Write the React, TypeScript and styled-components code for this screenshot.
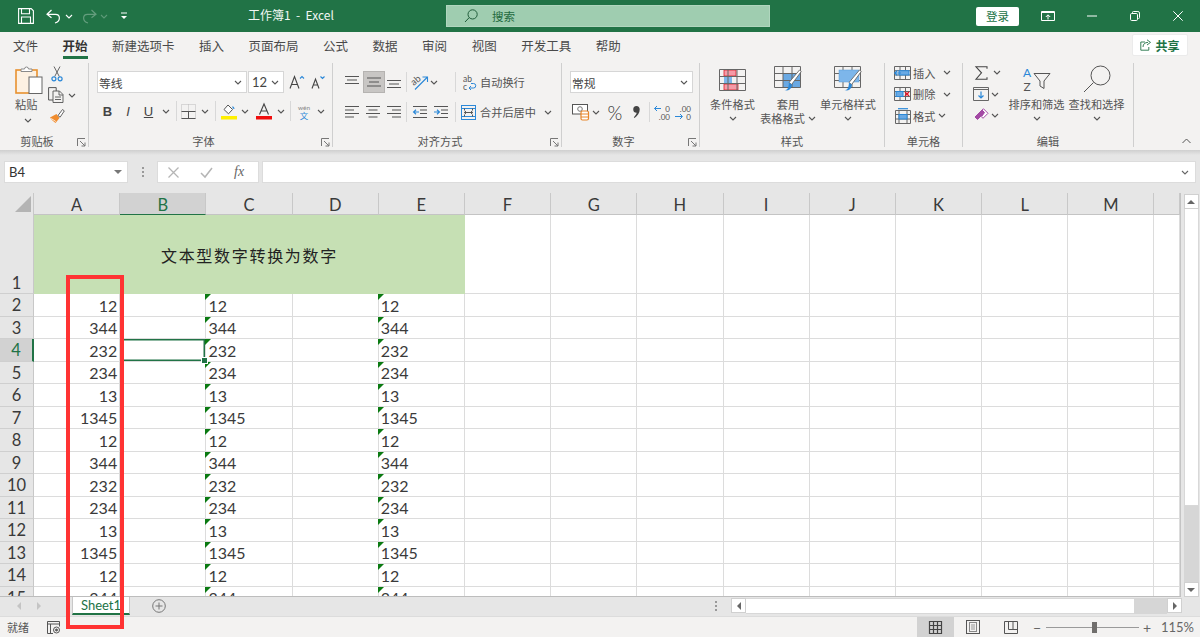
import React from "react";
import styled, { createGlobalStyle } from "styled-components";

const UI = `"Open Sans", "Noto Sans CJK SC", sans-serif`;
const CJK = `"Noto Sans CJK SC", "Noto Sans", sans-serif`;
const SHEET = `Lato, "Noto Sans CJK SC", sans-serif`;
const GREEN = "#217346";
const BLUE = "#2b88d8";

const Global = createGlobalStyle`
  html, body { margin: 0; padding: 0; background: #e6e6e6; }
  * { box-sizing: border-box; }
  svg { display: block; flex: none; overflow: visible; }
`;

const Page = styled.div`
  position: relative; width: 1200px; height: 637px; overflow: hidden;
  display: flex; flex-direction: column; font-family: ${UI}; color: #444;
`;

/* ---- title bar ---- */
const TitleBar = styled.div`
  height: 32px; flex: none; background: ${GREEN}; display: flex; align-items: center; color: #fff;
`;
const Qat = styled.div`width: 248px; padding-left: 18px; display: flex; align-items: center; flex: none;`;
const TitleText = styled.div`width: 198px; flex: none; font-size: 12px; font-family: ${CJK}; white-space: pre; color: #f2f7f4; padding-bottom: 4px;`;
const SearchBox = styled.div`
  width: 324px; height: 22px; flex: none; background: #9fcdb0; border: 1px solid #b0d6be;
  display: flex; align-items: center; padding-left: 17px; gap: 14px; color: #1f6b40;
  font-size: 11.5px; font-family: ${CJK};
`;
const SignIn = styled.div`
  margin-left: 206px; width: 43px; height: 19px; background: #fff; border-radius: 2px; color: ${GREEN};
  font-size: 11.5px; font-family: ${CJK}; display: flex; align-items: center; justify-content: center; flex: none;
`;
const WinBtn = styled.div<{ $w: number }>`
  width: ${(p) => p.$w}px; flex: none; display: flex; align-items: center; justify-content: center;
`;

/* ---- tabs ---- */
const TabRow = styled.div`
  height: 30px; flex: none; background: #f3f2f1; display: flex; align-items: center;
  padding: 0 12px 4px 13px; font-family: ${CJK}; font-size: 12.5px; gap: 24.5px; color: #444;
`;
const Tab = styled.div<{ $on?: boolean }>`
  position: relative; white-space: nowrap; font-weight: ${(p) => (p.$on ? 700 : 400)}; color: ${(p) => (p.$on ? "#333" : "#4a4a4a")};
  ${(p) => p.$on && `&::after { content: ""; position: absolute; left: 0; right: 0; bottom: -4px; height: 3px; background: ${GREEN}; }`}
`;
const Share = styled.div`
  margin-left: auto; width: 56px; height: 22px; background: #fff; border: 1px solid #ebebeb; border-radius: 2px;
  display: flex; align-items: center; justify-content: center; gap: 3px; color: ${GREEN}; font-weight: 700; font-size: 12px;
`;

/* ---- ribbon ---- */
const Ribbon = styled.div`
  height: 88px; flex: none; background: #f3f2f1; display: flex; font-family: ${CJK}; font-size: 11.2px; color: #555;
`;
const Group = styled.div<{ $w: number; $last?: boolean }>`
  width: ${(p) => p.$w}px; flex: none; display: flex; flex-direction: column; position: relative;
  &::after { content: ""; position: absolute; top: 1px; bottom: 3px; right: 0; width: 1px; background: ${(p) => (p.$last ? "transparent" : "#cfcfcf")}; }
`;
const GroupBody = styled.div<{ $pl?: number; $row?: boolean }>`
  height: 73px; flex: none; padding-left: ${(p) => p.$pl ?? 0}px; display: flex; flex-direction: ${(p) => (p.$row ? "row" : "column")};
`;
const GroupFoot = styled.div<{ $end?: boolean }>`
  height: 15px; display: flex; align-items: center; padding: 0 ${(p) => (p.$end ? 9 : 1)}px 3px 0;
  justify-content: ${(p) => (p.$end ? "flex-end" : "flex-start")};
`;
const GroupLabel = styled.div<{ $launcher?: boolean }>`
  flex: 1; text-align: center; padding-right: ${(p) => (p.$launcher ? 14 : 0)}px; color: #555; line-height: 14px;
`;
const LauncherBox = styled.div`position: absolute; right: 3px; bottom: 3px;`;
const ToolRow = styled.div<{ $mt?: number; $h?: number }>`
  display: flex; align-items: center; height: ${(p) => p.$h ?? 22}px; margin-top: ${(p) => p.$mt ?? 0}px; flex: none;
`;
const Tool = styled.div<{ $w: number; $ml?: number; $on?: boolean }>`
  width: ${(p) => p.$w}px; margin-left: ${(p) => p.$ml ?? 0}px; height: 22px; flex: none;
  display: flex; align-items: center; justify-content: center; color: #444;
  ${(p) => p.$on && `background: #c8c6c4; border: 1px solid #b5b3b1;`}
`;
const Letter = styled.span<{ $b?: boolean; $i?: boolean; $u?: boolean }>`
  font-family: "Liberation Sans", sans-serif; font-size: 13px; line-height: 1;
  font-weight: ${(p) => (p.$b ? 700 : 400)}; font-style: ${(p) => (p.$i ? "italic" : "normal")};
  text-decoration: ${(p) => (p.$u ? "underline" : "none")}; color: #444;
`;
const VSep = styled.div<{ $ml?: number; $mr?: number }>`
  width: 1px; height: 20px; flex: none; background: #d8d8d8; margin-left: ${(p) => p.$ml ?? 0}px; margin-right: ${(p) => p.$mr ?? 0}px;
`;
const Combo = styled.div<{ $w: number; $ml?: number }>`
  width: ${(p) => p.$w}px; height: 22px; margin-left: ${(p) => p.$ml ?? 0}px; background: #fff; border: 1px solid #d6d6d6; flex: none;
  display: flex; align-items: center; justify-content: space-between; padding: 0 4px 0 1px; font-size: 11.8px; color: #444;
`;
const ComboNum = styled.span`font-family: Lato, sans-serif; font-size: 13px; padding-left: 2px;`;
const ToolText = styled.span<{ $ml?: number }>`margin-left: ${(p) => p.$ml ?? 0}px; white-space: nowrap; flex: none; color: #555;`;
const BigBtn = styled.div<{ $w: number; $ml?: number }>`
  width: ${(p) => p.$w}px; margin-left: ${(p) => p.$ml ?? 0}px; flex: none; display: flex; flex-direction: column; align-items: center;
`;
const BigIcon = styled.div<{ $pb?: number; $h?: number }>`
  height: ${(p) => p.$h ?? 35}px; flex: none; display: flex; align-items: flex-end; padding-bottom: ${(p) => p.$pb ?? 5}px;
`;
const BigLine = styled.div`height: 14px; line-height: 14px; flex: none; white-space: nowrap; display: flex; align-items: center; gap: 3px; color: #555;`;
const ClipLeft = styled.div`width: 47px; padding-left: 15px; flex: none; display: flex; flex-direction: column;`;
const PasteLabel = styled.div`height: 17px; line-height: 17px; flex: none; color: #555;`;
const PasteChev = styled.div`height: 14px; padding-left: 9px; display: flex; align-items: center;`;
const ClipRight = styled.div`flex: none; display: flex; flex-direction: column; padding-top: 4px; gap: 5px;`;
const SmallRow = styled.div`display: flex; align-items: center; height: 16px;`;
const SmallCol = styled.div`width: 35px; flex: none;`;
const Shade = styled.div`height: 5px; flex: none; background: linear-gradient(#cfcfcf, #e6e6e6);`;

/* ---- formula bar ---- */
const FormulaBar = styled.div`
  height: 38px; flex: none; background: #e6e6e6; display: flex; align-items: flex-start; padding: 6px 4px 0 4px;
`;
const NameBox = styled.div`
  width: 124px; height: 22px; background: #fff; border: 1px solid #dcdcdc; display: flex; align-items: center; justify-content: space-between;
  padding: 0 5px 0 4px; font-family: Lato, sans-serif; font-size: 13px; color: #333; flex: none;
`;
const Dots = styled.div`width: 29px; height: 22px; flex: none; display: flex; align-items: center; justify-content: center;`;
const FxBox = styled.div`
  width: 102px; height: 22px; background: #fff; border: 1px solid #dcdcdc; display: flex; align-items: center; gap: 21px; padding-left: 10px; flex: none;
`;
const FxText = styled.span`font-family: "Liberation Serif", serif; font-style: italic; font-size: 14px; color: #666;`;
const FormulaInput = styled.div`
  margin-left: 3px; flex: 1; height: 22px; background: #fff; border: 1px solid #dcdcdc; display: flex; align-items: center; justify-content: flex-end; padding-right: 6px;
`;

/* ---- sheet ---- */
const SheetArea = styled.div`height: 404px; flex: none; display: flex; background: #e6e6e6;`;
const Grid = styled.div`
  width: 1181px; flex: none; height: 404px; overflow: hidden; display: grid; background: #fff;
  grid-template-columns: 34px repeat(13, 86.2px) 1fr; grid-template-rows: 22px 79px; grid-auto-rows: 22.5px;
  border-bottom: 1px solid #bdbdbd; border-right: 1px solid #c4c4c4; font-family: ${SHEET}; font-weight: 400; font-size: 16px; color: #3a3a3a;
`;
const Corner = styled.div`background: #e6e6e6; border-right: 1px solid #c8c8c8; display: flex; align-items: center; justify-content: flex-end; padding-right: 2px;`;
const ColHead = styled.div<{ $on?: boolean }>`
  background: ${(p) => (p.$on ? "#d2d2d2" : "#e6e6e6")}; color: ${(p) => (p.$on ? GREEN : "#3a3a3a")}; border-right: 1px solid #c8c8c8;
  border-bottom: ${(p) => (p.$on ? `1px solid ${GREEN}` : "1px solid #c4c4c4")}; display: flex; align-items: center; justify-content: center; padding-top: 3px; font-size: 16.5px;
`;
const RowHead = styled.div<{ $on?: boolean; $tall?: boolean }>`
  background: ${(p) => (p.$on ? "#d2d2d2" : "#e6e6e6")}; color: ${(p) => (p.$on ? GREEN : "#3a3a3a")};
  border-bottom: 1px solid #cfcfcf; border-right: ${(p) => (p.$on ? `2px solid ${GREEN}` : "1px solid #c8c8c8")};
  display: flex; align-items: ${(p) => (p.$tall ? "flex-end" : "center")}; justify-content: center; font-size: 16.5px; padding-top: 1px;
`;
const Merged = styled.div`
  grid-column: span 5; background: #c6e0b4; display: flex; align-items: center; justify-content: center;
  font-family: ${CJK}; font-weight: 400; font-size: 16px; letter-spacing: 1.7px; color: #222;
`;
const Cell = styled.div<{ $num?: boolean; $text?: boolean; $sel?: boolean }>`
  position: relative; border-right: 1px solid #dcdcdc; border-bottom: 1px solid #dcdcdc; display: flex; align-items: center; padding: 1px 2px 0;
  justify-content: ${(p) => (p.$num ? "flex-end" : "flex-start")}; min-width: 0;
  ${(p) => p.$text && `&::before { content: ""; position: absolute; left: -1px; top: 0; border-style: solid; border-width: 6px 6px 0 0; border-color: #0b7a12 transparent transparent transparent; }`}
  ${(p) => p.$sel && `box-shadow: inset 0 0 0 1.5px ${GREEN}; &::after { content: ""; position: absolute; right: -3px; bottom: -3px; width: 5px; height: 5px; background: ${GREEN}; border: 1px solid #fff; z-index: 2; }`}
`;
const VScroll = styled.div`width: 19px; flex: none; display: flex; flex-direction: column; align-items: center; padding: 1px 0 0 1px;`;
const ScrollBtn = styled.div`
  width: 15px; height: 15px; flex: none; background: #fff; border: 1px solid #d0d0d0;
  display: flex; align-items: center; justify-content: center;
`;
const VThumb = styled.div`width: 15px; height: 297px; background: #fff; flex: none; border: 1px solid #d8d8d8; border-top: 0;`;
const VTrack = styled.div`width: 15px; flex: 1; background: #d6d6d6;`;

/* ---- sheet tab bar ---- */
const SheetBar = styled.div`height: 19px; flex: none; background: #e6e6e6; display: flex; align-items: flex-start; padding-left: 16px;`;
const Arrows = styled.div`width: 56px; height: 18px; display: flex; align-items: center; gap: 14px; flex: none;`;
const SheetTab = styled.div`
  width: 58px; height: 18px; flex: none; background: #fff; color: ${GREEN}; border-left: 1px solid #c8c8c8; border-right: 1px solid #c8c8c8;
  border-bottom: 2px solid ${GREEN}; display: flex; align-items: center; justify-content: center; font-size: 13px; font-family: Lato, sans-serif;
`;
const AddBtn = styled.div`margin-left: 22px; height: 18px; display: flex; align-items: center; flex: none;`;
const BarDots = styled.div`margin-left: 549px; width: 6px; height: 18px; display: flex; align-items: center; flex: none;`;
const HScroll = styled.div`margin-left: 10px; width: 451px; height: 16px; margin-top: 1px; display: flex; flex: none;`;
const HThumb = styled.div`width: 388px; background: #fff; border-top: 1px solid #d8d8d8; border-bottom: 1px solid #d8d8d8; flex: none;`;
const HTrack = styled.div`flex: 1; background: #d6d6d6;`;

/* ---- status bar ---- */
const StatusBar = styled.div`
  height: 21px; flex: none; background: #f3f2f1; border-top: 1px solid #dcdcdc; display: flex; align-items: center; padding-left: 7px;
  font-family: ${CJK}; font-size: 11px; color: #555;
`;
const MacroSlot = styled.div`margin-left: 18px; flex: none;`;
const ViewBtn = styled.div<{ $on?: boolean; $ml?: number }>`
  width: 37px; height: 20px; flex: none; margin-left: ${(p) => p.$ml ?? 0}px; background: ${(p) => (p.$on ? "#d2d2d2" : "transparent")};
  display: flex; align-items: center; justify-content: center;
`;
const Zoomer = styled.div`margin-left: 3px; width: 124px; height: 20px; display: flex; align-items: center; flex: none;`;
const ZoomTrack = styled.div`
  position: relative; width: 93px; height: 1px; background: #9a9a9a; margin: 0 3px 0 4px; flex: none;
`;
const ZoomThumb = styled.div`position: absolute; left: 46px; top: -5px; width: 5px; height: 11px; background: #706e6c;`;
const ZoomSign = styled.span`width: 10px; font-family: Lato, sans-serif; font-size: 14px; color: #666; text-align: center; flex: none;`;
const ZoomPct = styled.div`margin-left: 5px; font-family: Lato, sans-serif; font-size: 13px; color: #666; flex: none;`;

/* ---- annotation ---- */
const RedBox = styled.div`
  position: absolute; left: 66px; top: 275px; width: 58px; height: 354px; border: 4.5px solid #ff3333; pointer-events: none; z-index: 5;
`;

/* ---- icons ---- */
const Chev = ({ c = "#555" }: { c?: string }) => (
  <svg width="8" height="5" viewBox="0 0 8 5"><path d="M1 1l3 3 3-3" fill="none" stroke={c} strokeWidth="1.1" /></svg>
);
const Launcher = () => (
  <LauncherBox>
    <svg width="9" height="9" viewBox="0 0 9 9" fill="none" stroke="#777"><path d="M.5 8V.5H8M3 3l5 5M8 4.5V8H4.5" /></svg>
  </LauncherBox>
);
const SaveIcon = () => (
  <svg width="16" height="16" viewBox="0 0 16 16" fill="none" stroke="#fff" strokeWidth="1.1">
    <path d="M.6.6h12.6l2.2 2.2v12.6H.6zM3.5.8v5h8v-5M3.5 15.2V9h9v6.2" />
  </svg>
);
const UndoIcon = () => (
  <svg width="15" height="15" viewBox="0 0 15 15" fill="none" stroke="#fff" strokeWidth="1.2">
    <path d="M5.5 1 1 5.3l4.5 3.5M1.5 5.3h8c5 0 5.500 7-.5 8.700" />
  </svg>
);
const RedoIcon = () => (
  <svg width="15" height="15" viewBox="0 0 15 15" fill="none" stroke="#fff" strokeWidth="1.2" opacity=".3">
    <path d="M9.5 1 14 5.3 9.5 8.8M13.5 5.3h-8c-5 0-5.5 7 .5 8.700" />
  </svg>
);
const QatMenu = () => (
  <svg width="8" height="8" viewBox="0 0 8 8"><path d="M1 1h6" stroke="#fff" /><path d="M1 4h6L4 7z" fill="#fff" /></svg>
);
const SearchIcon = () => (
  <svg width="14" height="14" viewBox="0 0 14 14" fill="none" stroke="#1f5c3a" strokeWidth="1"><circle cx="8.6" cy="5.4" r="4.6" /><path d="M5.2 8.6 1 13" /></svg>
);
const RibbonDisplay = () => (
  <svg width="14" height="12" viewBox="0 0 14 12" fill="none" stroke="#fff"><path d="M.5 1.5h13v9H.5z" /><path d="M.5 2.5h13" /><path d="M7 9.5V5M4.8 7 7 4.8 9.2 7" /></svg>
);
const MinIcon = () => <svg width="10" height="2" viewBox="0 0 10 2"><path d="M0 1h10" stroke="#fff" /></svg>;
const RestoreIcon = () => (
  <svg width="10" height="10" viewBox="0 0 10 10" fill="none" stroke="#fff"><rect x=".5" y="2.5" width="7" height="7" rx="1.2" /><path d="M2.5 2.3V1.6A1 1 0 0 1 3.5.5h4.4a1.6 1.6 0 0 1 1.6 1.6v4.4a1 1 0 0 1-1.1 1" /></svg>
);
const CloseIcon = () => (
  <svg width="10" height="10" viewBox="0 0 10 10" stroke="#fff"><path d="M.3.3l9.4 9.4M9.7.3.3 9.7" /></svg>
);
const ShareIcon = () => (
  <svg width="12" height="12" viewBox="0 0 12 12" fill="none" stroke={GREEN} strokeWidth=".9"><path d="M5 3H.8v8.200h8V8" /><path d="M3 8c0-3 2-4.600 5-4.600M7 .8l3.500 2.600L7 6" /></svg>
);
const PasteIcon = () => (
  <svg width="28" height="28" viewBox="0 0 28 28">
    <rect x="1" y="4" width="21" height="23" fill="#fdf1e2" stroke="#e8912f" strokeWidth="1.6" />
    <path d="M6 5.500V3h3.500a2 2 0 0 1 4 0H17v2.500z" fill="#fff" stroke="#8a8a8a" />
    <rect x="14" y="11" width="13" height="16.500" fill="#fff" stroke="#666" />
  </svg>
);
const CutIcon = () => (
  <svg width="12" height="16" viewBox="0 0 12 16" fill="none">
    <path d="M3 .5 8.300 10.500M9 .5 3.700 10.500" stroke="#666" /><circle cx="2.900" cy="12.800" r="2" stroke={BLUE} strokeWidth="1.200" /><circle cx="9.100" cy="12.800" r="2" stroke={BLUE} strokeWidth="1.200" />
  </svg>
);
const CopyIcon = () => (
  <svg width="16" height="16" viewBox="0 0 16 16" fill="none" stroke="#555"><path d="M5 13H.6V.6h7.600V4" /><path d="M5 4h6.500L15 7.500v8H5zM11 4v4h4M7 10h6M7 12.500h6" strokeWidth=".9" /></svg>
);
const PainterIcon = () => (
  <svg width="16" height="16" viewBox="0 0 16 16">
    <path d="M1 9.500 7.500 6l3 4L6.500 15C5 14 2.500 12 1 9.500z" fill="#f08c2e" />
    <path d="M2.200 10.500 6.800 13.500" stroke="#fff" strokeWidth=".8" />
    <path d="M9 7.500 13.500 1.500l1.800 1.400-4.200 6.300z" fill="#fff" stroke="#555" strokeWidth=".9" />
  </svg>
);
const GrowIcon = ({ up }: { up?: boolean }) => (
  <svg width={up ? 16 : 14} height="16" viewBox={up ? "0 0 16 16" : "0 0 14 16"} fill="none">
    <path d={up ? "M1 14.500 5.500 2.500l4.500 12M2.800 10.500h5.400" : "M1 14.500 4.500 5l3.500 9.500M2.300 11h4.400"} stroke="#444" strokeWidth="1.100" />
    <path d={up ? "M11 4.500l2-2 2 2" : "M9.500 2.500l2 2 2-2"} stroke={BLUE} strokeWidth="1.100" />
  </svg>
);
const BorderIcon = () => (
  <svg width="15" height="15" viewBox="0 0 15 15" fill="none">
    <path d="M.5.5h14v14H.5zM7.500.5v14" stroke="#bbb" strokeDasharray="1 1" /><path d="M.5 7.500h14M7.500 7.500v7M.5 14.500h14" stroke="#555" />
  </svg>
);
const FillIcon = () => (
  <svg width="16" height="17" viewBox="0 0 16 17">
    <path d="M3 6.500 7 2l4.500 4.500-4 4.300z" fill="#fff" stroke="#555" /><path d="M11.500 3c1.500.8 2 2 2 3l-2-.5z" fill={BLUE} />
    <rect y="13" width="16" height="3.500" fill="#ffef00" />
  </svg>
);
const FontColorIcon = () => (
  <svg width="16" height="17" viewBox="0 0 16 17" fill="none">
    <path d="M3.500 11.500 8 1l4.500 10.500M5 8h6" stroke="#444" strokeWidth="1.100" /><rect y="13" width="16" height="3.500" fill="#f00d0d" />
  </svg>
);
const WenIcon = () => (
  <svg width="16" height="17" viewBox="0 0 16 17">
    <text x="8" y="6.500" textAnchor="middle" fontFamily="Lato, sans-serif" fontSize="6.500" fill="#888">wén</text>
    <text x="8" y="16" textAnchor="middle" fontFamily='"Noto Sans CJK SC", sans-serif' fontSize="8.500" fill={BLUE}>文</text>
  </svg>
);
const AlignLines = ({ d }: { d: string }) => (
  <svg width="14" height="14" viewBox="0 0 14 14" fill="none" stroke="#555" strokeWidth="1.100"><path d={d} /></svg>
);
const OrientIcon = () => (
  <svg width="17" height="17" viewBox="0 0 17 17" fill="none">
    <text x="0" y="9" fontFamily="Lato, sans-serif" fontSize="9.500" fill="#555" transform="rotate(-40 5 8)">ab</text>
    <path d="M3 15.500 15 3.500M10.500 3h5v5" stroke={BLUE} strokeWidth="1.100" />
  </svg>
);
const IndentIcon = ({ inc }: { inc?: boolean }) => (
  <svg width="14" height="14" viewBox="0 0 14 14" fill="none">
    <path d="M0 1.500h14M7 5h7M7 8.500h7M0 12.500h14" stroke="#555" strokeWidth="1.100" />
    <path d={inc ? "M0 7h5M3 4.800 5.400 7 3 9.200" : "M6 7H1M3 4.800.6 7 3 9.200"} stroke={BLUE} strokeWidth="1.200" />
  </svg>
);
const WrapIcon = () => (
  <svg width="14" height="17" viewBox="0 0 14 17" fill="none">
    <text x="0" y="7.500" fontFamily="Lato, sans-serif" fontSize="8.500" fill="#555">ab</text>
    <text x="0" y="16" fontFamily="Lato, sans-serif" fontSize="8.500" fill="#555">c</text>
    <path d="M6 14h4.500a2.200 2.200 0 0 0 0-4.500H8M8 12l-2 2 2 2" stroke={BLUE} />
  </svg>
);
const MergeIcon = () => (
  <svg width="15" height="15" viewBox="0 0 15 15" fill="none">
    <rect x=".5" y=".5" width="14" height="14" stroke={BLUE} /><path d="M.5 3.500h14M.5 11.500h14" stroke={BLUE} />
    <path d="M3.500 7.500h8M5 6 3.300 7.500 5 9M10 6l1.700 1.500L10 9" stroke="#555" />
    <path d="M3.500 3.500v2M11.500 3.500v2M3.500 9.500v2M11.500 9.500v2" stroke="#555" />
  </svg>
);
const CurrencyIcon = () => (
  <svg width="17" height="18" viewBox="0 0 17 18" fill="none">
    <rect x=".5" y="1.500" width="15" height="9.500" fill="#fff" stroke="#555" /><circle cx="8" cy="6" r="2.300" stroke="#777" />
    <rect x="9" y="8" width="7.500" height="9" rx="1.500" fill="#fff" stroke="#e8862a" strokeWidth="1.200" /><path d="M9 11h7.500M9 14h7.500" stroke="#e8862a" />
  </svg>
);
const PercentText = styled.span`font-family: Lato, sans-serif; font-weight: 300; font-size: 19px; color: #333;`;
const CommaIcon = () => (
  <svg width="7" height="12" viewBox="0 0 7 12"><path d="M3.500 0a3.200 3.200 0 0 1 3.200 3.500C6.700 7 4.500 10 1.500 12l-.7-.8C2.500 9.500 3.500 8 3.700 6.700a3.300 3.300 0 1 1-.2-6.700z" fill="#444" /></svg>
);
const DecIcon = ({ inc }: { inc?: boolean }) => (
  <svg width="16" height="17" viewBox="0 0 16 17" fill="none">
    <text x="16" y="7.500" textAnchor="end" fontFamily="Lato, sans-serif" fontSize="8" fill="#555">{inc ? ".00" : "0"}</text>
    <text x="16" y="16" textAnchor="end" fontFamily="Lato, sans-serif" fontSize="8" fill="#555">{inc ? "0" : ".00"}</text>
    {inc ? <path d="M0 12.500h7M5 10l2.500 2.500L5 15" stroke={BLUE} /> : <path d="M7 4.500H.5M3 2 .5 4.500 3 7" stroke={BLUE} />}
  </svg>
);
const Table = () => <path d="M.5.5h26v21H.5zM.5 7.500h26M.5 14.500h26M9 .5v21M18 .5v21" fill="none" stroke="#666" />;
const CondIcon = () => (
  <svg width="27" height="22" viewBox="0 0 27 22">
    <rect x="5" y="1" width="12" height="6" fill="#f59aa6" stroke="#d9202a" strokeWidth=".8" /><rect x="5" y="15" width="14" height="6" fill="#f59aa6" stroke="#d9202a" strokeWidth=".8" /><rect x="5" y="8" width="8" height="6" fill="#7db6ea" />
    <Table />
  </svg>
);
const Brush = () => (
  <>
    <path d="M15 16.500 25.500 4l1.800 1.500-9.700 13z" fill="#fff" stroke="#666" strokeWidth=".9" />
    <path d="M10.500 24c3 0 4-1.500 4.500-7.500l3 2.300C17.500 23 15 25.500 10.500 24z" fill={BLUE} />
  </>
);
const TableStyleIcon = () => (
  <svg width="29" height="26" viewBox="0 0 29 26">
    <rect x="9" y="7.500" width="18" height="14" fill="#6aa9e3" />
    <Table />
    <Brush />
  </svg>
);
const CellStyleIcon = () => (
  <svg width="29" height="26" viewBox="0 0 29 26">
    <Table />
    <rect x="5" y="4" width="20" height="12" fill="#7db6ea" stroke="#5a9bd8" strokeWidth=".5" />
    <Brush />
  </svg>
);
const InsertIcon = () => (
  <svg width="17" height="14" viewBox="0 0 17 14" fill="none">
    <path d="M.500.500h16v13H.500zM.500 4.700h16M.500 9h16M6 .500v13M11.500 .500v13" stroke="#666" />
    <rect x="5" y="4.700" width="10" height="4.300" fill="#6aa9e3" stroke={BLUE} /><path d="M7 7H.800M3.300 4.500.800 7l2.500 2.500" stroke={BLUE} strokeWidth="1.200" />
  </svg>
);
const DeleteIcon = () => (
  <svg width="17" height="14" viewBox="0 0 17 14" fill="none">
    <path d="M.500.500h16v13H.500zM.500 9.500h16M.500 4.500h16M6 .500v13M11.500 .500v13" stroke="#666" />
    <rect x="2" y="4.500" width="7" height="5" fill="#6aa9e3" stroke={BLUE} /><path d="M11 5l4 4M15 5l-4 4" stroke="#e81123" strokeWidth="1.300" />
  </svg>
);
const FormatIcon = () => (
  <svg width="16" height="16" viewBox="0 0 16 16" fill="none">
    <path d="M.500 2.500h15v13H.500zM.500 6.500h15M.500 11h15M4 2.500v13M12 2.500v13" stroke="#666" />
    <rect x="4" y="6.500" width="8" height="4.500" fill="#6aa9e3" stroke={BLUE} /><path d="M3 .700h10" stroke={BLUE} strokeWidth="1.200" />
  </svg>
);
const SumIcon = () => <svg width="13" height="14" viewBox="0 0 13 14" fill="none" stroke="#444" strokeWidth="1.100"><path d="M12 2.800V.8H1l5.500 6-5.500 6.400h11v-2" /></svg>;
const FillDownIcon = () => (
  <svg width="16" height="14" viewBox="0 0 16 14" fill="none"><path d="M.500.500h15v13H.500zM.500 2.500h15" stroke="#666" /><path d="M8 4.500v6M5.500 8.500 8 11l2.500-2.500" stroke={BLUE} strokeWidth="1.200" /></svg>
);
const EraserIcon = () => (
  <svg width="15" height="15" viewBox="0 0 15 15">
    <path d="M1 9 8 2l2.500 2.500-7 7z" fill="#a349a4" stroke="#a349a4" /><path d="M8 2l1.500-1.200L14 5.300l-5 5-1.500-1.500 3-4.300z" fill="#fff" stroke="#a349a4" />
  </svg>
);
const SortIcon = () => (
  <svg width="28" height="26" viewBox="0 0 28 26" fill="none">
    <text x="0" y="10.500" fontFamily="Lato, sans-serif" fontSize="12" fill={BLUE}>A</text>
    <text x="0.500" y="25" fontFamily="Lato, sans-serif" fontSize="12" fill="#555">Z</text>
    <path d="M11 7.500h16l-6 7.500v7.500l-4-2.500v-5z" stroke="#555" />
  </svg>
);
const FindIcon = () => (
  <svg width="28" height="28" viewBox="0 0 28 28" fill="none" stroke="#555"><circle cx="17.500" cy="10.500" r="9.500" /><path d="M10.500 17.500 1 27" /></svg>
);
const XIcon = () => <svg width="11" height="11" viewBox="0 0 11 11" stroke="#b5b5b5" strokeWidth="1.300"><path d="M.5.5l10 10M10.500.5l-10 10" /></svg>;
const CheckIcon = () => <svg width="13" height="11" viewBox="0 0 13 11" fill="none" stroke="#b5b5b5" strokeWidth="1.500"><path d="M1 6l4 4 7-9" /></svg>;
const DotsIcon = ({ c = "#999" }: { c?: string }) => <svg width="2" height="10" viewBox="0 0 2 10" fill={c}><rect y="0" width="2" height="2" /><rect y="4" width="2" height="2" /><rect y="8" width="2" height="2" /></svg>;
const Tri = ({ dir, c = "#666" }: { dir: "up" | "down" | "left" | "right"; c?: string }) => {
  const d = { up: "M0 5 4 1l4 4z", down: "M0 1l4 4 4-4z", left: "M5 0 1 4l4 4z", right: "M1 0l4 4-4 4z" }[dir];
  const v = dir === "up" || dir === "down";
  return <svg width={v ? 8 : 6} height={v ? 6 : 8} viewBox={v ? "0 0 8 6" : "0 0 6 8"}><path d={d} fill={c} /></svg>;
};
const CornerTri = () => <svg width="16" height="16" viewBox="0 0 16 16"><path d="M16 0v16H0z" fill="#b4b4b4" /></svg>;
const AddIcon = () => <svg width="14" height="14" viewBox="0 0 14 14" fill="none" stroke="#777"><circle cx="7" cy="7" r="6.300" /><path d="M7 3.500v7M3.500 7h7" /></svg>;
const MacroIcon = () => (
  <svg width="14" height="13" viewBox="0 0 14 13" fill="none" stroke="#555"><path d="M6 12.500H.500V.500h12v5M.500 3h12M3.500 3v9.500" /><circle cx="9.500" cy="9" r="3" fill="#f3f2f1" /><circle cx="9.500" cy="9" r="1" fill="#555" /></svg>
);
const NormalIcon = () => <svg width="13" height="13" viewBox="0 0 13 13" fill="none" stroke="#444" strokeWidth="1.200"><path d="M.5.500h12v12H.500zM.5 4.500h12M.5 8.500h12M4.500.500v12M8.500.500v12" /></svg>;
const LayoutIcon = () => <svg width="14" height="14" viewBox="0 0 14 14" fill="none" stroke="#555"><rect x=".5" y=".5" width="13" height="13" /><rect x="3.500" y="2.500" width="7" height="9" stroke="#888" /><path d="M5 5h4M5 7h4M5 9h4" stroke="#999" /></svg>;
const BreakIcon = () => <svg width="14" height="13" viewBox="0 0 14 13" fill="none" stroke="#555"><path d="M.5.500h13v12H.500zM4.500.500V8.500h9M9 .500v8" /></svg>;

const COLS = "ABCDEFGHIJKLM".split("");
const VALUES = [12, 344, 232, 234, 13, 1345, 12, 344, 232, 234, 13, 1345, 12, 344];

const SheetRow = ({ row, value }: { row: number; value: number }) => (
  <>
    <RowHead $on={row === 4}>{row}</RowHead>
    {COLS.map((c) => {
      if (c === "A") return <Cell key={c} $num>{value}</Cell>;
      if (c === "C" || c === "E") return <Cell key={c} $text>{value}</Cell>;
      return <Cell key={c} $sel={row === 4 && c === "B"} />;
    })}
    <Cell />
  </>
);

export default function App() {
  return (
    <Page>
      <Global />
      <TitleBar>
        <Qat>
          <SaveIcon />
          <Tool $w={15} $ml={12}><UndoIcon /></Tool>
          <Tool $w={8} $ml={4}><Chev c="#fff" /></Tool>
          <Tool $w={15} $ml={9}><RedoIcon /></Tool>
          <Tool $w={8} $ml={3}><Chev c="#5d9a78" /></Tool>
          <Tool $w={8} $ml={12}><QatMenu /></Tool>
        </Qat>
        <TitleText>工作簿1  -  Excel</TitleText>
        <SearchBox><SearchIcon /><span>搜索</span></SearchBox>
        <SignIn>登录</SignIn>
        <WinBtn $w={58}><RibbonDisplay /></WinBtn>
        <WinBtn $w={30}><MinIcon /></WinBtn>
        <WinBtn $w={56}><RestoreIcon /></WinBtn>
        <WinBtn $w={30}><CloseIcon /></WinBtn>
      </TitleBar>

      <TabRow>
        <Tab>文件</Tab>
        <Tab $on>开始</Tab>
        <Tab>新建选项卡</Tab>
        <Tab>插入</Tab>
        <Tab>页面布局</Tab>
        <Tab>公式</Tab>
        <Tab>数据</Tab>
        <Tab>审阅</Tab>
        <Tab>视图</Tab>
        <Tab>开发工具</Tab>
        <Tab>帮助</Tab>
        <Share><ShareIcon />共享</Share>
      </TabRow>

      <Ribbon>
        <Group $w={89}>
          <GroupBody $row>
            <ClipLeft>
              <BigIcon $h={34} $pb={2}><PasteIcon /></BigIcon>
              <PasteLabel>粘贴</PasteLabel>
              <PasteChev><Chev /></PasteChev>
            </ClipLeft>
            <ClipRight>
              <SmallRow><Tool $w={12} $ml={4}><CutIcon /></Tool></SmallRow>
              <SmallRow><Tool $w={16} $ml={1}><CopyIcon /></Tool><Tool $w={10} $ml={3}><Chev /></Tool></SmallRow>
              <SmallRow><Tool $w={16} $ml={2}><PainterIcon /></Tool></SmallRow>
            </ClipRight>
          </GroupBody>
          <GroupFoot><GroupLabel $launcher>剪贴板</GroupLabel><Launcher /></GroupFoot>
        </Group>

        <Group $w={244}>
          <GroupBody $pl={8}>
            <ToolRow $mt={9}>
              <Combo $w={150}><span>等线</span><Chev /></Combo>
              <Combo $w={36} $ml={1}><ComboNum>12</ComboNum><Chev /></Combo>
              <Tool $w={16} $ml={5}><GrowIcon up /></Tool>
              <Tool $w={14} $ml={6}><GrowIcon /></Tool>
            </ToolRow>
            <ToolRow $mt={7}>
              <Tool $w={21}><Letter $b>B</Letter></Tool>
              <Tool $w={20}><Letter $i>I</Letter></Tool>
              <Tool $w={21}><Letter $u>U</Letter></Tool>
              <Tool $w={14}><Chev /></Tool>
              <VSep $ml={3} $mr={4} />
              <Tool $w={15}><BorderIcon /></Tool>
              <Tool $w={18}><Chev /></Tool>
              <VSep $ml={1} $mr={5} />
              <Tool $w={16}><FillIcon /></Tool>
              <Tool $w={15}><Chev /></Tool>
              <Tool $w={16} $ml={4}><FontColorIcon /></Tool>
              <Tool $w={18}><Chev /></Tool>
              <VSep $mr={5} />
              <Tool $w={16}><WenIcon /></Tool>
              <Tool $w={17}><Chev /></Tool>
            </ToolRow>
          </GroupBody>
          <GroupFoot><GroupLabel $launcher>字体</GroupLabel><Launcher /></GroupFoot>
        </Group>

        <Group $w={229}>
          <GroupBody $pl={10}>
            <ToolRow $mt={9}>
              <Tool $w={18}><AlignLines d="M0 1.500h14M2 5h10M0 8.500h14" /></Tool>
              <Tool $w={22} $ml={2} $on><AlignLines d="M0 3h14M2 7h10M0 11h14" /></Tool>
              <Tool $w={18}><AlignLines d="M0 5.500h14M2 9h10M0 12.500h14" /></Tool>
              <VSep $ml={3} $mr={5} />
              <Tool $w={17}><OrientIcon /></Tool>
              <Tool $w={10}><Chev /></Tool>
              <VSep $ml={16} $mr={7} />
              <Tool $w={14}><WrapIcon /></Tool>
              <ToolText $ml={3}>自动换行</ToolText>
            </ToolRow>
            <ToolRow $mt={8}>
              <Tool $w={18}><AlignLines d="M0 1.500h14M0 5h9M0 8.500h14M0 12h9" /></Tool>
              <Tool $w={24}><AlignLines d="M0 1.500h14M2.500 5h9M0 8.500h14M2.500 12h9" /></Tool>
              <Tool $w={18}><AlignLines d="M0 1.500h14M5 5h9M0 8.500h14M5 12h9" /></Tool>
              <VSep $ml={3} $mr={6} />
              <Tool $w={14}><IndentIcon /></Tool>
              <Tool $w={14} $ml={7}><IndentIcon inc /></Tool>
              <VSep $ml={7} $mr={5} />
              <Tool $w={15}><MergeIcon /></Tool>
              <ToolText $ml={4}>合并后居中</ToolText>
              <Tool $w={10} $ml={7}><Chev /></Tool>
            </ToolRow>
          </GroupBody>
          <GroupFoot><GroupLabel $launcher>对齐方式</GroupLabel><Launcher /></GroupFoot>
        </Group>

        <Group $w={138}>
          <GroupBody $pl={8}>
            <ToolRow $mt={9}><Combo $w={123}><span>常规</span><Chev /></Combo></ToolRow>
            <ToolRow $mt={8}>
              <Tool $w={17} $ml={2}><CurrencyIcon /></Tool>
              <Tool $w={10} $ml={2}><Chev /></Tool>
              <Tool $w={16} $ml={6}><PercentText>%</PercentText></Tool>
              <Tool $w={10} $ml={8}><CommaIcon /></Tool>
              <VSep $ml={8} $mr={4} />
              <Tool $w={16}><DecIcon /></Tool>
              <Tool $w={16} $ml={5}><DecIcon inc /></Tool>
            </ToolRow>
          </GroupBody>
          <GroupFoot><GroupLabel $launcher>数字</GroupLabel><Launcher /></GroupFoot>
        </Group>

        <Group $w={185}>
          <GroupBody $pl={5} $row>
            <BigBtn $w={55}>
              <BigIcon $pb={6}><CondIcon /></BigIcon>
              <BigLine>条件格式</BigLine>
              <BigLine><Chev /></BigLine>
            </BigBtn>
            <BigBtn $w={56}>
              <BigIcon><TableStyleIcon /></BigIcon>
              <BigLine>套用</BigLine>
              <BigLine>表格格式<Chev /></BigLine>
            </BigBtn>
            <BigBtn $w={64}>
              <BigIcon><CellStyleIcon /></BigIcon>
              <BigLine>单元格样式</BigLine>
              <BigLine><Chev /></BigLine>
            </BigBtn>
          </GroupBody>
          <GroupFoot><GroupLabel>样式</GroupLabel></GroupFoot>
        </Group>

        <Group $w={78}>
          <GroupBody $pl={9}>
            <ToolRow $h={21.5}>
              <Tool $w={17}><InsertIcon /></Tool>
              <ToolText $ml={2}>插入</ToolText>
              <Tool $w={10} $ml={7}><Chev /></Tool>
            </ToolRow>
            <ToolRow $h={21.5}>
              <Tool $w={17}><DeleteIcon /></Tool>
              <ToolText $ml={2}>删除</ToolText>
              <Tool $w={10} $ml={7}><Chev /></Tool>
            </ToolRow>
            <ToolRow $h={21.5}>
              <Tool $w={17}><FormatIcon /></Tool>
              <ToolText $ml={2}>格式</ToolText>
              <Tool $w={10} $ml={2}><Chev /></Tool>
            </ToolRow>
          </GroupBody>
          <GroupFoot><GroupLabel>单元格</GroupLabel></GroupFoot>
        </Group>

        <Group $w={171}>
          <GroupBody $pl={10} $row>
            <SmallCol>
              <ToolRow $h={21.5}><Tool $w={16}><SumIcon /></Tool><Tool $w={10} $ml={3}><Chev /></Tool></ToolRow>
              <ToolRow $h={21.5}><Tool $w={16}><FillDownIcon /></Tool><Tool $w={10} $ml={1}><Chev /></Tool></ToolRow>
              <ToolRow $h={21.5}><Tool $w={16}><EraserIcon /></Tool><Tool $w={10} $ml={1}><Chev /></Tool></ToolRow>
            </SmallCol>
            <BigBtn $w={57}>
              <BigIcon><SortIcon /></BigIcon>
              <BigLine>排序和筛选</BigLine>
              <BigLine><Chev /></BigLine>
            </BigBtn>
            <BigBtn $w={57} $ml={3}>
              <BigIcon $pb={4}><FindIcon /></BigIcon>
              <BigLine>查找和选择</BigLine>
              <BigLine><Chev /></BigLine>
            </BigBtn>
          </GroupBody>
          <GroupFoot><GroupLabel>编辑</GroupLabel></GroupFoot>
        </Group>

        <Group $w={66} $last>
          <GroupBody />
          <GroupFoot $end>
            <svg width="9" height="6" viewBox="0 0 9 6" fill="none" stroke="#555"><path d="M.5 5 4.500 1l4 4" /></svg>
          </GroupFoot>
        </Group>
      </Ribbon>
      <Shade />

      <FormulaBar>
        <NameBox>B4<Tri dir="down" c="#777" /></NameBox>
        <Dots><DotsIcon /></Dots>
        <FxBox><XIcon /><CheckIcon /><FxText>fx</FxText></FxBox>
        <FormulaInput><Chev c="#666" /></FormulaInput>
      </FormulaBar>

      <SheetArea>
        <Grid>
          <Corner><CornerTri /></Corner>
          {COLS.map((c) => <ColHead key={c} $on={c === "B"}>{c}</ColHead>)}
          <ColHead />
          <RowHead $tall>1</RowHead>
          <Merged>文本型数字转换为数字</Merged>
          {COLS.slice(5).map((c) => <Cell key={c} />)}
          <Cell />
          {VALUES.map((v, i) => <SheetRow key={i} row={i + 2} value={v} />)}
        </Grid>
        <VScroll>
          <ScrollBtn><Tri dir="up" /></ScrollBtn>
          <VThumb />
          <VTrack />
          <ScrollBtn><Tri dir="down" /></ScrollBtn>
        </VScroll>
      </SheetArea>

      <SheetBar>
        <Arrows><Tri dir="left" c="#c4c4c4" /><Tri dir="right" c="#c4c4c4" /></Arrows>
        <SheetTab>Sheet1</SheetTab>
        <AddBtn><AddIcon /></AddBtn>
        <BarDots><DotsIcon /></BarDots>
        <HScroll>
          <ScrollBtn><Tri dir="left" /></ScrollBtn>
          <HThumb />
          <HTrack />
          <ScrollBtn><Tri dir="right" /></ScrollBtn>
        </HScroll>
      </SheetBar>

      <StatusBar>
        <span>就绪</span>
        <MacroSlot><MacroIcon /></MacroSlot>
        <ViewBtn $on $ml={856}><NormalIcon /></ViewBtn>
        <ViewBtn><LayoutIcon /></ViewBtn>
        <ViewBtn $ml={1}><BreakIcon /></ViewBtn>
        <Zoomer>
          <ZoomSign>−</ZoomSign>
          <ZoomTrack><ZoomThumb /></ZoomTrack>
          <ZoomSign>+</ZoomSign>
        </Zoomer>
        <ZoomPct>115%</ZoomPct>
      </StatusBar>

      <RedBox />
    </Page>
  );
}
